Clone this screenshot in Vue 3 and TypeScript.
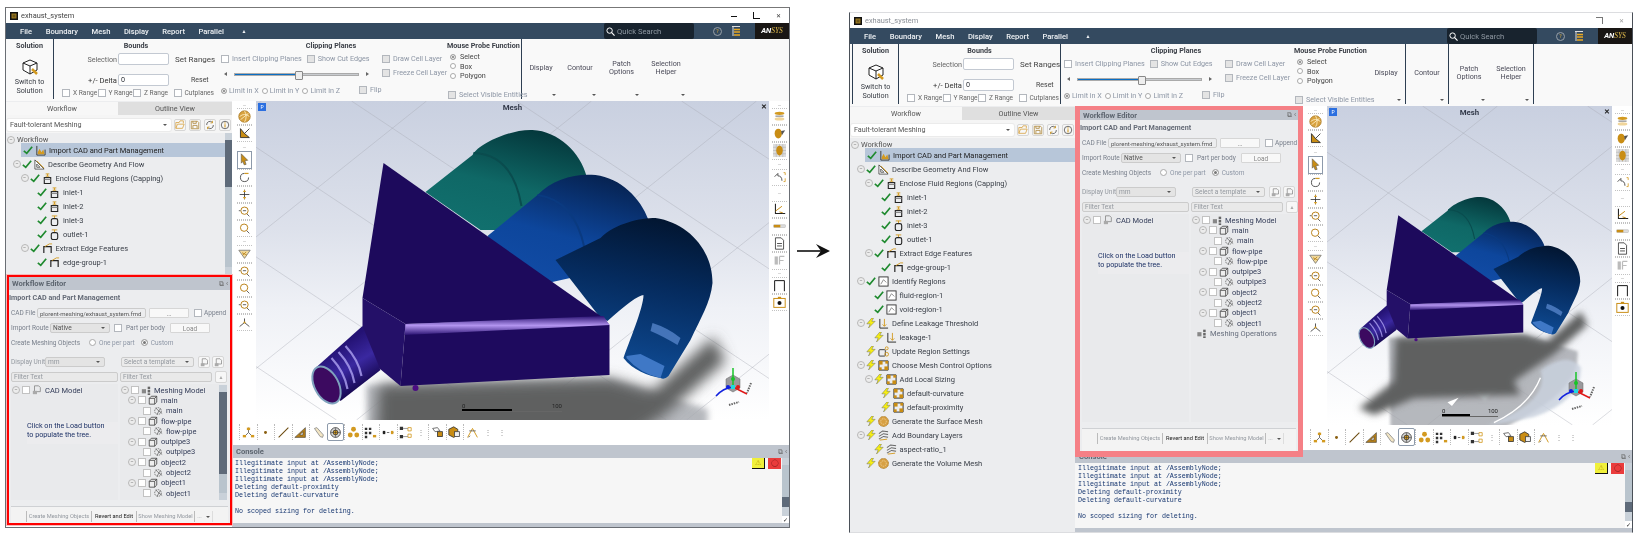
<script setup lang="ts">
interface TreeRow { label: string; level: number; exp?: boolean; status: string; icon: string; sel?: boolean; tone?: string }
interface Win { id: string; title: string; vw: number; grid: string[]; transform: string; tree: TreeRow[]; scroll: boolean }

const baseTree: TreeRow[] = [
  { label: 'Import CAD and Part Management', level: 1, status: 'check', icon: 'i-import', sel: true },
  { label: 'Describe Geometry And Flow', level: 1, exp: true, status: 'check', icon: 'i-geom' },
  { label: 'Enclose Fluid Regions (Capping)', level: 2, exp: true, status: 'check', icon: 'i-cap' },
  { label: 'inlet-1', level: 3, status: 'check', icon: 'i-cap' },
  { label: 'inlet-2', level: 3, status: 'check', icon: 'i-cap' },
  { label: 'inlet-3', level: 3, status: 'check', icon: 'i-capr' },
  { label: 'outlet-1', level: 3, status: 'check', icon: 'i-capr' },
  { label: 'Extract Edge Features', level: 2, exp: true, status: 'check', icon: 'i-edge' },
  { label: 'edge-group-1', level: 3, status: 'check', icon: 'i-edge' },
]
const moreTree: TreeRow[] = [
  { label: 'Identify Regions', level: 1, exp: true, status: 'check', icon: 'i-region' },
  { label: 'fluid-region-1', level: 2, status: 'check', icon: 'i-region' },
  { label: 'void-region-1', level: 2, status: 'check', icon: 'i-region' },
  { label: 'Define Leakage Threshold', level: 1, exp: true, status: 'bolt', icon: 'i-leak' },
  { label: 'leakage-1', level: 2, status: 'bolt', icon: 'i-leak' },
  { label: 'Update Region Settings', level: 1, status: 'bolt', icon: 'i-update' },
  { label: 'Choose Mesh Control Options', level: 1, exp: true, status: 'bolt', icon: 'i-control' },
  { label: 'Add Local Sizing', level: 2, exp: true, status: 'bolt', icon: 'i-control' },
  { label: 'default-curvature', level: 3, status: 'bolt', icon: 'i-control' },
  { label: 'default-proximity', level: 3, status: 'bolt', icon: 'i-control' },
  { label: 'Generate the Surface Mesh', level: 1, status: 'bolt', icon: 'i-ball' },
  { label: 'Add Boundary Layers', level: 1, exp: true, status: 'bolt', icon: 'i-layers' },
  { label: 'aspect-ratio_1', level: 2, status: 'bolt', icon: 'i-layers' },
  { label: 'Generate the Volume Mesh', level: 1, status: 'bolt', icon: 'i-ball' },
]

const grid = (w: number): string[] => {
  const out: string[] = []
  for (let c = -400; c < w + 500; c += 165) {
    out.push(`M${c} 0 L${c + 480} 319`)
    out.push(`M${c + 240} 0 L${c - 160} 319`)
  }
  return out
}

const windows: Win[] = [
  { id: 'a', title: 'exhaust_system', vw: 512, grid: grid(512), transform: 'translate(-256 -103)', tree: baseTree, scroll: true },
  { id: 'b', title: 'exhaust_system', vw: 284, grid: grid(284), transform: 'translate(-141 18) scale(.553)', tree: [...baseTree, ...moreTree], scroll: false },
]

const menus = ['File', 'Boundary', 'Mesh', 'Display', 'Report', 'Parallel']
const leftStrip: (string | number)[] = [7, 'i-globe', 'i-axes', 9, 'i-arrow', 'i-rotate', 'i-pan', 'i-zoomin', 'i-zoomfit', 8, 'i-funnel', 'i-zoomin', 'i-zoomfit', 'i-zoomin', 'i-triad']
const rightStrip: (string | number)[] = [7, 'i-disc', 'i-half', 'i-meshball', 9, 'i-undo', 15, 'i-plot', 'i-bar', 'i-note', 'i-off', 7, 'i-corner', 'i-camera']
const hTools = ['i-net', 'i-dot', 'i-line', 'i-tri', 'i-pencil', 'i-target', 'i-cluster', 'i-grid', 'i-arrows', 'i-split', 'gap', 'i-tag', 'i-boxes', 'i-peak', 'gap', 'gap']
const consoleLines = [
  'Illegitimate input at /AssemblyNode;',
  'Illegitimate input at /AssemblyNode;',
  'Illegitimate input at /AssemblyNode;',
  'Deleting default-proximity',
  'Deleting default-curvature',
  '\u00a0',
  'No scoped sizing for deleting.',
]
const tools = [
  { label: ['Display'], cls: 't1' },
  { label: ['Contour'], cls: 't2' },
  { label: ['Patch', 'Options'], cls: 't3' },
  { label: ['Selection', 'Helper'], cls: 't4' },
]
const meshRows = [
  { label: 'main', level: 1, kind: 'part' },
  { label: 'main', level: 2, kind: 'obj' },
  { label: 'flow-pipe', level: 1, kind: 'part' },
  { label: 'flow-pipe', level: 2, kind: 'obj' },
  { label: 'outpipe3', level: 1, kind: 'part' },
  { label: 'outpipe3', level: 2, kind: 'obj' },
  { label: 'object2', level: 1, kind: 'part' },
  { label: 'object2', level: 2, kind: 'obj' },
  { label: 'object1', level: 1, kind: 'part' },
  { label: 'object1', level: 2, kind: 'obj' },
]
const ribs = [
  'M345 348 Q358 362 361 378',
  'M338 354 Q351 368 354 385',
  'M331 360 Q344 374 347 391',
]
</script>

<template>
  <div class="page">
    <svg class="defs" width="0" height="0" aria-hidden="true">
      <defs>
        <linearGradient id="bg-teal" x1=".7" y1="0" x2=".3" y2="1"><stop offset="0" stop-color="#04373b" /><stop offset=".55" stop-color="#0f6866" /><stop offset="1" stop-color="#11706e" /></linearGradient>
        <linearGradient id="bg-blue" x1=".7" y1="0" x2=".3" y2="1"><stop offset="0" stop-color="#062250" /><stop offset=".55" stop-color="#0d469c" /><stop offset="1" stop-color="#124ca6" /></linearGradient>
        <linearGradient id="bg-navy" x1=".6" y1="0" x2=".4" y2="1"><stop offset="0" stop-color="#021632" /><stop offset=".4" stop-color="#052b5e" /><stop offset=".75" stop-color="#0b3f80" /><stop offset="1" stop-color="#104f9a" /></linearGradient>
        <linearGradient id="bg-pipe" gradientUnits="userSpaceOnUse" x1="335" y1="350" x2="360" y2="390"><stop offset="0" stop-color="#241274" /><stop offset=".5" stop-color="#3a28a0" /><stop offset="1" stop-color="#170852" /></linearGradient>
        <linearGradient id="bg-band" x1="0" y1="0" x2="0" y2="1"><stop offset="0" stop-color="#2a1272" /><stop offset=".5" stop-color="#b294ef" /><stop offset="1" stop-color="#2a1272" /></linearGradient>
        <filter id="soft" x="-20%" y="-20%" width="140%" height="140%"><feGaussianBlur stdDeviation="7" /></filter>
        <filter id="soft2" x="-10%" y="-10%" width="120%" height="120%"><feGaussianBlur stdDeviation="3" /></filter>

        <g id="model">
          <path d="M369 560 L366 387 L610 381 L707 411 Q712 470 628 520 L556 560 Z" fill="#a4a7ad" opacity=".8" filter="url(#soft2)" />
          <path d="M544 545 Q660 500 640 445 Q690 410 713 440 Q715 500 628 530 Z" fill="#c9d1de" opacity=".85" filter="url(#soft2)" />
          <path d="M500 400 Q560 395 590 440 L540 500 Q500 470 490 430 Z" fill="#d7e3e4" opacity=".6" filter="url(#soft2)" />
          <path d="M378 387 L610 381 L652 393 L713 339 L725 363 L664 417 L592 465 L604 490 L411 496 L339 526 L312 514 L375 465 Z" fill="#5f6060" filter="url(#soft)" />
          <path d="M556 540 Q620 510 640 459" fill="none" stroke="#fff" stroke-width="2.500" />
          <path d="M472 503 L492 495 L480 510 Z" fill="#fff" />
          <path d="M425 194 L472 157 C478 146 510 131 532 132 C558 133 580 155 586 178 L590 200 L522 232 L480 232 Z" fill="url(#bg-teal)" />
          <path d="M473 155 Q512 156 521 208" fill="none" stroke="#0a4c4e" stroke-width="2" />
          <path d="M487 238 L537 197 C552 181 575 175 595 177 C620 180 640 200 648 222 L650 262 L525 290 Z" fill="url(#bg-blue)" />
          <path d="M537 197 Q574 202 584 250" fill="none" stroke="#0a3a80" stroke-width="2" />
          <path d="M555 262 L600 240 C615 225 640 220 655 220 C688 225 712 252 712 285 C710 305 700 320 690 342 L668 378 Q664 382 660 380 C648 378 632 372 623 360 C628 345 643 310 643 297 Q636 297 607 323 L600 320 Z" fill="url(#bg-navy)" />
          <path d="M652 325 Q668 330 680 340 L677 347 Q662 338 650 333 Z" fill="#5e8dd4" opacity=".7" />
          <path d="M626 358 L640 356 L664 368 L660 380 Q640 376 626 360 Z" fill="#3f78c6" />
          <path d="M383 165 L603 320 L405 326 L362 300 Z" fill="#1d0a5c" />
          <path d="M362 300 L405 326 L400 388 L376 368 L362 340 Z" fill="#241068" />
          <path d="M405 326 L603 320 L609 327 L609 377 L400 388 Z" fill="#1e0a5e" />
          <path d="M405 326 L603 318 L609 327 L404 337 Z" fill="url(#bg-band)" />
          <circle cx="415" cy="390" r="3" fill="#4b0d82" />
          <path d="M316 369 L362 328 L380 372 L340 403 Z" fill="url(#bg-pipe)" />
          <path v-for="r in ribs" :key="r" :d="r" stroke="#a79bec" stroke-width="2.200" fill="none" opacity=".85" />
          <ellipse cx="326" cy="387" rx="12" ry="20" transform="rotate(-28 326 387)" fill="#3c0a60" stroke="#7fa2bd" stroke-width="2" />
        </g>

        <symbol id="i-check" viewBox="0 0 12 12"><path d="M1 7 L4.5 10 L11 2" fill="none" stroke="#1f8a2f" stroke-width="2" /></symbol>
        <symbol id="i-bolt" viewBox="0 0 12 12"><path d="M7 0 L1 7 H5 L3 12 L11 4 H7 L9 0 Z" fill="#f7ef13" stroke="#555" stroke-width=".5" /></symbol>
        <symbol id="i-import" viewBox="0 0 12 12"><path d="M2 1 V11 H11 V5" fill="none" stroke="#333" /><path d="M3 8 L5 4 L7 8 L9 5 L10.500 10 H3 Z" fill="#d39a20" /></symbol>
        <symbol id="i-geom" viewBox="0 0 12 12"><path d="M1 11 L1 1 L11 11 Z M3 9 L3 5.500 L6.500 9 Z" fill="#fff" stroke="#333" stroke-width=".8" /><path d="M3 2 L11 10" stroke="#d39a20" /></symbol>
        <symbol id="i-cap" viewBox="0 0 12 12"><path d="M4 1 H8 M6 1 V3.500 M4 3.500 H8" stroke="#d39a20" fill="none" /><rect x="2.500" y="5" width="7" height="6.500" fill="none" stroke="#222" stroke-width="1.200" /><path d="M2.500 7 H9.500" stroke="#777" /></symbol>
        <symbol id="i-capr" viewBox="0 0 12 12"><path d="M3 1 H9 M6 1 V4" stroke="#d39a20" fill="none" /><rect x="2.500" y="4" width="7" height="7.500" rx="2" fill="none" stroke="#222" stroke-width="1.200" /></symbol>
        <symbol id="i-edge" viewBox="0 0 12 12"><path d="M2 11 V4 H10 V11" fill="none" stroke="#222" stroke-width="1.300" /><path d="M3 4 L8 1 L11 1" fill="none" stroke="#d39a20" /></symbol>
        <symbol id="i-region" viewBox="0 0 12 12"><rect x="1" y="1" width="10" height="10" fill="#fff" stroke="#333" /><path d="M3 9 L6 4 L9 7" fill="none" stroke="#888" /></symbol>
        <symbol id="i-leak" viewBox="0 0 12 12"><path d="M2 1 V11 H11" fill="none" stroke="#222" /><path d="M7 1 V9 M5 7 L7 9 L9 7" fill="none" stroke="#d39a20" /></symbol>
        <symbol id="i-update" viewBox="0 0 12 12"><rect x="1" y="4" width="7" height="7" rx="1" fill="none" stroke="#333" /><circle cx="9.500" cy="2.500" r="1.600" fill="none" stroke="#d39a20" /><circle cx="9.500" cy="9" r="2" fill="none" stroke="#d39a20" /></symbol>
        <symbol id="i-control" viewBox="0 0 12 12"><path d="M1 11 V1 H11" fill="none" stroke="#222" /><path d="M11 1 V11 H1" fill="none" stroke="#222" /><rect x="1" y="1" width="4" height="4" fill="#c98d14" /><rect x="7" y="7" width="4" height="4" fill="#c98d14" /><rect x="8" y="1" width="3" height="3" fill="#c98d14" /><rect x="1" y="8" width="3" height="3" fill="#c98d14" /></symbol>
        <symbol id="i-ball" viewBox="0 0 12 12"><circle cx="6" cy="6" r="5.500" fill="#d7a043" stroke="#a8761d" stroke-dasharray="1 .6" /><circle cx="6" cy="6" r="3" fill="none" stroke="#f2d9a4" stroke-dasharray="1 1" /></symbol>
        <symbol id="i-layers" viewBox="0 0 12 12"><path d="M1 4 L5 1 L11 2 M1 7 L6 4 L11 5 M1 10 L6 7 L11 8" fill="none" stroke="#666" stroke-width="1.100" /><path d="M2 11 L10 10" stroke="#d39a20" /></symbol>
        <symbol id="i-cube" viewBox="0 0 12 12"><path d="M1.500 4 L8 4 L8 11 L1.500 11 Z M1.500 4 L4 1.500 H10.500 V8.500 L8 11 M8 4 L10.500 1.500" fill="#eee" stroke="#444" /></symbol>
        <symbol id="i-obj" viewBox="0 0 12 12"><circle cx="6" cy="6" r="4" fill="none" stroke="#666" stroke-dasharray="2 1" /><path d="M3 2 L7 6 L5 10 M9 3 L7 6 L11 9" fill="none" stroke="#555" stroke-width=".8" /></symbol>
        <symbol id="i-stack" viewBox="0 0 12 12"><rect x="1" y="5" width="5" height="5" fill="#888" /><rect x="8" y="2" width="3" height="3" fill="#666" /><rect x="8" y="6" width="3" height="3" fill="#666" /><rect x="8" y="10" width="3" height="2" fill="#666" /></symbol>
        <symbol id="i-file" viewBox="0 0 12 12"><path d="M3 1 H8 L10 3 V8 H3 Z" fill="none" stroke="#888" /><path d="M1 7 H6 V11 H1 Z" fill="#aaa" /></symbol>
        <symbol id="i-open" viewBox="0 0 12 12"><path d="M1 10 V3 H5 L6 1 H10 V4 M1 10 H9 L11 5 H3 Z" fill="none" stroke="#d9a64a" /></symbol>
        <symbol id="i-save" viewBox="0 0 12 12"><path d="M1.500 1.500 H9 L10.500 3 V10.500 H1.500 Z M3.500 10 V6.500 H8.500 V10 M3.500 1.500 V4 H7.500 V1.500" fill="none" stroke="#b08a40" /></symbol>
        <symbol id="i-sync" viewBox="0 0 12 12"><path d="M2 6 A4 4 0 0 1 9 3 M10 6 A4 4 0 0 1 3 9" fill="none" stroke="#555" /><path d="M9 1 V3.500 H6.500 M3 11 V8.500 H5.500" fill="none" stroke="#d39a20" /></symbol>
        <symbol id="i-info" viewBox="0 0 12 12"><circle cx="6" cy="6" r="4.500" fill="none" stroke="#555" /><path d="M6 5 V9" stroke="#d39a20" stroke-width="1.300" /><circle cx="6" cy="3.500" r=".8" fill="#d39a20" /></symbol>
        <symbol id="i-globe" viewBox="0 0 16 16"><circle cx="8" cy="8" r="7" fill="#d8a23f" stroke="#a8761d" /><path d="M2 8 Q8 3 14 8 M3 12 L13 4 M8 1 Q12 8 8 15" fill="none" stroke="#fff1c9" /></symbol>
        <symbol id="i-axes" viewBox="0 0 16 16"><path d="M3 2 V13 H14 L8 8 Z" fill="#c98d14" stroke="#222" /><path d="M8 8 L14 2" stroke="#222" /></symbol>
        <symbol id="i-arrow" viewBox="0 0 16 16"><path d="M4 1 L12 9 L8.500 9.500 L10 14 L7.500 14.500 L6 10.500 L4 12.500 Z" fill="#c98d14" stroke="#555" stroke-width=".7" /></symbol>
        <symbol id="i-rotate" viewBox="0 0 16 16"><path d="M13 8 A5 5 0 1 1 8 3" fill="none" stroke="#333" /><path d="M8 3 L13 3" stroke="#d39a20" stroke-width="1.500" /></symbol>
        <symbol id="i-pan" viewBox="0 0 16 16"><path d="M8 2 V14 M2 8 H14" stroke="#333" /><path d="M8 2 L6 5 H10 Z M8 14 L6 11 H10 Z" fill="#d39a20" /></symbol>
        <symbol id="i-zoomin" viewBox="0 0 16 16"><circle cx="8" cy="7" r="4.500" fill="none" stroke="#b9821a" stroke-width="1.200" /><path d="M11 11 L14 14 M1 7 H3 M6 7 H10" stroke="#444" /></symbol>
        <symbol id="i-zoomfit" viewBox="0 0 16 16"><circle cx="7.500" cy="7" r="4.500" fill="none" stroke="#b9821a" stroke-width="1.200" /><path d="M11 11 L14 14" stroke="#444" /></symbol>
        <symbol id="i-funnel" viewBox="0 0 16 16"><path d="M1 4 H15 L8 14 Z" fill="#f1d99b" stroke="#777" /><path d="M5 7 L11 10 M10 6 L6 10" stroke="#b9821a" /></symbol>
        <symbol id="i-triad" viewBox="0 0 16 16"><path d="M8 3 V8 L2 13 M8 8 L14 13" fill="none" stroke="#333" /><circle cx="8" cy="8" r="1.300" fill="#d39a20" /></symbol>
        <symbol id="i-disc" viewBox="0 0 16 16"><ellipse cx="8" cy="4" rx="6" ry="2" fill="#d39a20" /><rect x="3" y="7" width="10" height="1" fill="#555" /><ellipse cx="8" cy="11" rx="6" ry="2" fill="#f0d59b" /></symbol>
        <symbol id="i-half" viewBox="0 0 16 16"><ellipse cx="6.500" cy="8" rx="4.500" ry="6" fill="#c98d14" /><path d="M10 5 L15 4 L11 10 Z" fill="#555" /></symbol>
        <symbol id="i-meshball" viewBox="0 0 16 16"><rect width="16" height="16" fill="#ddd" /><path d="M0 4 H16 M0 8 H16 M0 12 H16 M4 0 V16 M8 0 V16 M12 0 V16" stroke="#aaa" stroke-width=".6" /><ellipse cx="8" cy="8" rx="4" ry="6" fill="#c98d14" /></symbol>
        <symbol id="i-undo" viewBox="0 0 16 16"><path d="M2 7 L6 3 L6 6 Q11 6 11 12" fill="none" stroke="#333" /><path d="M13 2 H15 V5 M15 9 V13 H13" fill="none" stroke="#d39a20" /></symbol>
        <symbol id="i-plot" viewBox="0 0 16 16"><path d="M3 1 V13 H15" fill="none" stroke="#222" stroke-width="1.300" /><path d="M3 10 L11 4 M8 11 L12 12" stroke="#c98d14" stroke-width="1.200" /></symbol>
        <symbol id="i-bar" viewBox="0 0 16 16"><rect x="1" y="6" width="14" height="3" fill="#ddd" stroke="#999" stroke-width=".5" /><rect x="1" y="6" width="8" height="3" fill="#c98d14" /></symbol>
        <symbol id="i-note" viewBox="0 0 16 16"><path d="M3 1 H10 L13 4 V15 H3 Z M5 8 H11 M5 11 H11" fill="none" stroke="#333" /></symbol>
        <symbol id="i-off" viewBox="0 0 16 16"><rect x="2" y="3" width="4" height="10" fill="#bbb" /><path d="M8 3 H14 M8 8 H13 M8 3 V13" stroke="#bbb" stroke-width="1.500" /></symbol>
        <symbol id="i-corner" viewBox="0 0 16 16"><path d="M2 15 V2 H14 V15" fill="none" stroke="#111" stroke-width="1.200" /></symbol>
        <symbol id="i-camera" viewBox="0 0 16 16"><rect x="1" y="3" width="14" height="11" fill="#fff" stroke="#c98d14" stroke-width="1.200" /><circle cx="8" cy="8.500" r="2.500" fill="#111" /><rect x="6" y="1" width="4" height="2" fill="#c98d14" /></symbol>
        <symbol id="i-net" viewBox="0 0 16 16"><path d="M8 2 V8 M3 13 L8 8 L13 13" stroke="#555" fill="none" /><rect x="6" y="2" width="4" height="3" fill="#d39a20" /><rect x="1" y="11" width="4" height="3" fill="#d39a20" /><rect x="11" y="11" width="4" height="3" fill="#d39a20" /></symbol>
        <symbol id="i-dot" viewBox="0 0 16 16"><circle cx="8" cy="8" r="1.800" fill="#8a5f10" /></symbol>
        <symbol id="i-line" viewBox="0 0 16 16"><path d="M2 14 L14 2" stroke="#6c4c10" stroke-width="1.300" /></symbol>
        <symbol id="i-tri" viewBox="0 0 16 16"><path d="M1 14 L14 2 V14 Z M7 11 H11 V7 Z" fill="#b9821a" stroke="#333" stroke-width=".7" /></symbol>
        <symbol id="i-pencil" viewBox="0 0 16 16"><path d="M3 3 L6 2 L14 11 L13 14 L10 13 Z" fill="#f3e6c4" stroke="#888" /></symbol>
        <symbol id="i-target" viewBox="0 0 16 16"><circle cx="8" cy="8" r="6" fill="#d8d8d8" stroke="#333" /><circle cx="8" cy="8" r="3" fill="#d39a20" stroke="#333" /><path d="M8 2 V14 M2 8 H14" stroke="#333" stroke-width=".6" /></symbol>
        <symbol id="i-cluster" viewBox="0 0 16 16"><circle cx="8" cy="4" r="3" fill="#d39a20" /><circle cx="4" cy="11" r="3" fill="#d39a20" /><circle cx="12" cy="11" r="3" fill="#d39a20" /></symbol>
        <symbol id="i-grid" viewBox="0 0 16 16"><path d="M1 2 H4 V5 H1 Z M6 2 H9 V5 H6 Z M1 7 H4 V10 H1 Z M6 7 H9 V10 H6 Z M1 12 H4 V15 H1 Z" fill="#333" /><rect x="11" y="11" width="4" height="3" fill="#d39a20" /></symbol>
        <symbol id="i-arrows" viewBox="0 0 16 16"><path d="M1 8 H15" stroke="#555" stroke-dasharray="3 2" /><rect x="1" y="6" width="3" height="4" fill="#222" /><rect x="11" y="6" width="3" height="4" fill="#d39a20" /></symbol>
        <symbol id="i-split" viewBox="0 0 16 16"><path d="M1 1 H5 V5 H1 Z M1 11 H5 V15 H1 Z" fill="#333" /><path d="M11 2 H15 V6 H11 Z M11 10 H15 V14 H11 Z" fill="none" stroke="#d39a20" /><path d="M5 3 H11 M5 13 H11" stroke="#888" /></symbol>
        <symbol id="i-tag" viewBox="0 0 16 16"><path d="M2 3 L8 2 L11 6 L5 7 Z" fill="#fff" stroke="#555" /><rect x="8" y="7" width="6" height="6" fill="#c98d14" stroke="#333" /></symbol>
        <symbol id="i-boxes" viewBox="0 0 16 16"><path d="M1 4 L7 1 L12 4 V11 L7 14 L1 11 Z" fill="#c98d14" stroke="#333" /><rect x="8" y="7" width="6" height="6" fill="#eee" stroke="#444" /></symbol>
        <symbol id="i-peak" viewBox="0 0 16 16"><path d="M2 14 L8 3 L14 14" fill="none" stroke="#d39a20" stroke-width="1.200" /><path d="M4 6 L12 6 M3 14 L5 12" stroke="#555" /></symbol>
      </defs>
    </svg>

    <template v-for="(w, wi) in windows" :key="w.id">
      <div v-if="wi === 1" class="arrow-col">
        <svg class="arrow" width="34" height="16" viewBox="0 0 34 16"><path d="M0 8 H26" stroke="#111" stroke-width="1.600" /><path d="M33 8 L19 1 L24 8 L19 15 Z" fill="#111" /></svg>
      </div>

      <section class="win" :class="w.id">
        <header class="titlebar">
          <span class="appicon"></span>
          <span class="wintitle">{{ w.title }}</span>
          <span class="winbtns"><i class="wb min"></i><i class="wb max"></i><i class="wb close">✕</i></span>
        </header>

        <nav class="menubar">
          <span v-for="m in menus" :key="m" class="menu">{{ m }}</span>
          <span class="menu up">▲</span>
          <span class="search"><svg width="9" height="9" viewBox="0 0 10 10"><circle cx="4" cy="4" r="3" fill="none" stroke="#fff" stroke-width="1.100" /><path d="M6 6 L9.500 9.500" stroke="#fff" stroke-width="1.300" /></svg>Quick Search</span>
          <span class="help">?</span>
          <svg class="listicon" width="9" height="10" viewBox="0 0 9 10"><path d="M0 .5 H8" stroke="#ddd" /><path d="M1 1 V10" stroke="#ddd" /><path d="M2 3.500 H8 M2 6 H8 M2 9 H8" stroke="#e8a820" stroke-width="1.400" /></svg>
          <span class="brand">AN<b>SYS</b></span>
        </nav>

        <div class="ribbon">
          <div class="sec sol">
            <div class="sec-title">Solution</div>
            <svg class="solicon" width="16" height="16" viewBox="0 0 16 16"><path d="M1 4 L8 1 L15 4 V11 L8 15 L1 11 Z M1 4 L8 7 L15 4 M8 7 V15" fill="#fff" stroke="#222" /><path d="M10 10 L15 15" stroke="#d39a20" stroke-width="2.500" /></svg>
            <div class="sol-label">Switch to<br />Solution</div>
          </div>
          <div class="sec bounds">
            <div class="sec-title">Bounds</div>
            <div class="bgrid">
              <span class="rlab">Selection</span><span class="field"></span><span class="act">Set Ranges</span>
              <span class="rlab big">+/- Delta</span><span class="field">0</span><span class="act reset">Reset</span>
            </div>
            <div class="brow">
              <label class="ck"><i class="box"></i>X Range</label>
              <label class="ck"><i class="box"></i>Y Range</label>
              <label class="ck"><i class="box"></i>Z Range</label>
              <label class="ck cut"><i class="box"></i>Cutplanes</label>
            </div>
          </div>
          <div class="sec clip">
            <div class="sec-title">Clipping Planes</div>
            <div class="cliprow">
              <label class="ck off"><i class="box"></i>Insert Clipping Planes</label>
              <label class="ck off"><i class="box dis"></i>Show Cut Edges</label>
            </div>
            <div class="slider">
              <i class="tri l"></i>
              <span class="track"><span class="fill"></span><span class="thumb"></span></span>
              <i class="tri r"></i>
            </div>
            <div class="cliprow limits">
              <label class="rd off"><i class="dot on"></i>Limit in X</label>
              <label class="rd off"><i class="dot"></i>Limit in Y</label>
              <label class="rd off"><i class="dot"></i>Limit in Z</label>
              <label class="ck off flip"><i class="box dis"></i>Flip</label>
            </div>
            <div class="cellcol">
              <label class="ck off"><i class="box dis"></i>Draw Cell Layer</label>
              <label class="ck off"><i class="box dis"></i>Freeze Cell Layer</label>
            </div>
          </div>
          <div class="sec mouse">
            <div class="sec-title">Mouse Probe Function</div>
            <label class="rd v"><i class="dot on"></i>Select</label>
            <label class="rd v"><i class="dot"></i>Box</label>
            <label class="rd v"><i class="dot"></i>Polygon</label>
            <label class="ck off vis"><i class="box dis"></i>Select Visible Entities</label>
          </div>
          <div v-for="t in tools" :key="t.cls" class="tool" :class="t.cls">
            <span class="tool-label"><span v-for="l in t.label" :key="l">{{ l }}</span></span>
            <i class="caret"></i>
          </div>
        </div>

        <div class="body">
          <div class="leftcol">
            <div class="tabs"><span class="tab active">Workflow</span><span class="tab">Outline View</span></div>
            <div class="combo-row">
              <span class="combo">Fault-tolerant Meshing<i class="caret"></i></span>
              <span class="sq"><svg width="10" height="10"><use href="#i-open" /></svg></span>
              <span class="sq"><svg width="10" height="10"><use href="#i-save" /></svg></span>
              <span class="sq"><svg width="10" height="10"><use href="#i-sync" /></svg></span>
              <span class="sq"><svg width="10" height="10"><use href="#i-info" /></svg></span>
            </div>
            <div class="treewrap">
              <div class="tree">
                <div class="row top"><i class="exp">−</i><span class="lab">Workflow</span></div>
                <div v-for="r in w.tree" :key="r.label" class="row" :class="{ sel: r.sel }" :style="r.sel ? undefined : { paddingLeft: (r.level - 1) * 7.5 + 7 + 'px' }">
                  <i class="exp" :class="{ none: !r.exp }">−</i>
                  <svg class="st" width="10" height="10"><use :href="'#i-' + r.status" /></svg>
                  <svg class="ic" width="11" height="11"><use :href="'#' + r.icon" /></svg>
                  <span class="lab">{{ r.label }}</span>
                </div>
              </div>
              <div v-if="w.scroll" class="vscroll"><i class="sb-up"></i><i class="sb-thumb"></i><i class="sb-down"></i></div>
            </div>
          </div>

          <div class="editor">
            <div class="ed-head"><span>Workflow Editor</span><span class="ed-ic">⧉ ‹</span></div>
            <div class="ed-body">
              <div class="ed-title">Import CAD and Part Management</div>
              <div class="ed-row">
                <span class="el l-cad">CAD File</span><span class="efield w-cad">plorent-meshing/exhaust_system.fmd</span>
                <span class="ebtn w-dots">...</span><i class="box"></i><span class="el">Append</span>
              </div>
              <div class="ed-row">
                <span class="el l-route">Import Route</span><span class="efield sel w-route">Native<i class="caret"></i></span>
                <i class="box"></i><span class="el l-part">Part per body</span><span class="ebtn w-load">Load</span>
              </div>
              <div class="ed-row">
                <span class="el wide">Create Meshing Objects</span>
                <label class="rd off"><i class="dot big"></i>One per part</label>
                <label class="rd off"><i class="dot big on"></i>Custom</label>
              </div>
              <div class="ed-row unit">
                <span class="el faint l-unit">Display Unit</span><span class="efield sel w-route faint">mm<i class="caret"></i></span>
                <span class="efield sel w-tpl faint">Select a template<i class="caret"></i></span>
                <span class="sq"><svg width="9" height="9"><use href="#i-file" /></svg></span>
                <span class="sq"><svg width="9" height="9"><use href="#i-file" /></svg></span>
              </div>
              <div class="ed-row filter">
                <span class="efield w-fl faint">Filter Text</span><span class="efield w-fr faint">Filter Text</span><span class="sq low">▲</span>
              </div>
              <div class="trees">
                <div class="tcol">
                  <div class="trow"><i class="exp">−</i><i class="box"></i><svg width="10" height="10"><use href="#i-file" /></svg><span class="lab">CAD Model</span></div>
                  <div class="hint">Click on the Load button<br />to populate the tree.</div>
                </div>
                <div class="tcol right">
                  <div class="mlist">
                    <div class="trow"><i class="exp">−</i><i class="box"></i><svg width="10" height="10"><use href="#i-stack" /></svg><span class="lab">Meshing Model</span></div>
                    <div v-for="(m, i) in meshRows" :key="i" class="trow" :class="'lv' + m.level">
                      <i v-if="m.kind === 'part'" class="exp">−</i><i class="box"></i>
                      <svg width="10" height="10"><use :href="m.kind === 'part' ? '#i-cube' : '#i-obj'" /></svg>
                      <span class="lab">{{ m.label }}</span>
                    </div>
                    <div v-if="!w.scroll" class="trow ops"><svg width="11" height="10"><use href="#i-stack" /></svg><span class="lab">Meshing Operations</span></div>
                  </div>
                  <div v-if="w.scroll" class="vscroll slim"><i class="sb-up"></i><i class="sb-thumb long"></i><i class="sb-down"></i></div>
                </div>
              </div>
              <div class="ed-foot">
                <span class="fbtn faint">Create Meshing Objects</span>
                <span class="fbtn strong">Revert and Edit</span>
                <span class="fbtn faint">Show Meshing Model</span>
                <span class="fbtn faint more">...<i class="caret"></i></span>
              </div>
            </div>
          </div>

          <div class="graphics">
            <div class="gtop">
              <div class="strip">
                <template v-for="(s, i) in leftStrip" :key="i">
                  <span v-if="typeof s === 'number'" class="dots" :style="{ height: s + 'px' }">···</span>
                  <span v-else class="cell" :class="{ picked: s === 'i-arrow' }"><svg width="13" height="13"><use :href="'#' + s" /></svg></span>
                </template>
              </div>
              <div class="viewport">
                <svg class="scene" :viewBox="`0 0 ${w.vw} 319`">
                  <path v-for="g in w.grid" :key="g" :d="g" stroke="#a8abb3" stroke-opacity=".5" stroke-width=".8" fill="none" />
                  <g :transform="w.transform"><use href="#model" /></g>
                </svg>
                <span class="vp-badge">P</span>
                <span class="vp-title">Mesh</span>
                <span class="vp-close">✕</span>
                <div class="scalebar"><span class="sb-txt"><i>0</i><i>100</i></span><span class="sb-line"><b></b></span></div>
                <svg class="triad" width="44" height="44" viewBox="0 0 44 44">
                  <path d="M22 10 L29 14 V23 L22 27 L15 23 V14 Z" fill="#9a9a9d" stroke="#666" stroke-width=".5" />
                  <path d="M22 20 V3" stroke="#18c428" stroke-width="1.500" /><circle cx="22" cy="14" r="2" fill="#18c428" />
                  <path d="M22 22 L36 29" stroke="#e01818" stroke-width="1.500" /><circle cx="27" cy="22" r="2" fill="#e01818" />
                  <path d="M22 22 Q12 23 5 31" stroke="#1020e0" stroke-width="1.500" fill="none" /><circle cx="17" cy="22" r="2" fill="#1020e0" />
                  <rect x="20" y="20" width="4" height="4" fill="#20d8e0" />
                  <path d="M40 18 L36 28 M18 40 L28 37" stroke="#666" stroke-dasharray="1.500 1" stroke-width="2" />
                </svg>
              </div>
              <div class="strip rs">
                <template v-for="(s, i) in rightStrip" :key="i">
                  <span v-if="typeof s === 'number'" class="dots" :style="{ height: s + 'px' }">···</span>
                  <span v-else class="cell"><svg width="13" height="13"><use :href="'#' + s" /></svg></span>
                </template>
              </div>
            </div>
            <div class="htools">
              <template v-for="(t, i) in hTools" :key="i">
                <span v-if="t === 'gap'" class="hdots">⋮</span>
                <span v-else class="hcell" :class="{ picked: t === 'i-target' }"><svg width="13" height="13"><use :href="'#' + t" /></svg></span>
              </template>
            </div>
          </div>

          <div class="console">
            <div class="ed-head con-head"><span>Console</span><span class="ed-ic">⧉ ‹</span></div>
            <div class="con-body">
              <div class="con-text"><div v-for="(l, i) in consoleLines" :key="i">{{ l }}</div></div>
              <span class="warnbtn y">⚠</span><span class="warnbtn r">◯</span>
              <div class="vscroll slim con"><i class="sb-up"></i><i class="sb-space"></i><i class="sb-thumb"></i><i class="sb-down"></i><span class="tick">✓</span></div>
            </div>
            <div class="con-foot"></div>
          </div>
        </div>
      </section>
    </template>
  </div>
</template>

<style>
html, body { margin: 0; background: #fff; overflow: hidden; }
</style>

<style scoped>
.page { display: flex; align-items: flex-start; width: 1643px; height: 539px; padding-left: 5px; box-sizing: border-box; background: #fff; font-family: Roboto, "Liberation Sans", sans-serif; font-size: 7.2px; color: #2d3138; overflow: hidden; }
.defs { display: block; width: 0; height: 0; flex: none; }
i { font-style: normal; }
.arrow-col { width: 59px; flex: none; padding-top: 243px; padding-left: 7px; box-sizing: border-box; }
.arrow { display: block; }
.win { width: 785px; flex: none; height: 521px; margin-top: 7px; box-sizing: border-box; display: flex; flex-direction: column; border: 1px solid #6a6e74; border-top-color: #777; background: #fff; filter: blur(.3px); }
.win.b { width: 784px; margin-top: 12px; border-color: #dcdde0; border-left-color: #4a5058; border-right-color: #4a5058; }

.titlebar { height: 15px; flex: none; display: flex; align-items: center; padding-left: 4px; gap: 3px; }
.appicon { width: 8px; height: 8px; background: #3b3016; box-shadow: inset 0 0 0 1.500px #111, inset 0 0 2px 3px #9c7a20; }
.wintitle { color: #444; font-size: 7.4px; }
.b .wintitle { color: #8a8f96; }
.winbtns { margin-left: auto; display: flex; align-items: center; gap: 16px; padding-right: 7px; }
.wb { width: 6px; height: 6px; display: block; font-size: 6px; line-height: 6px; color: #333; }
.min { border-bottom: 1px solid #111; height: 3px; margin-top: -2px; }
.max { border-left: 1px solid #111; border-bottom: 1px solid #111; }
.b .min { visibility: hidden; }
.b .max { border-left: 0; border-bottom: 0; border-top: 1px solid #777; border-right: 1px solid #777; }
.b .close { color: #999; }

.menubar { height: 16px; flex: none; background: #344a60; display: flex; align-items: center; color: #eef1f4; font-weight: 500; font-size: 7.6px; padding-left: 14px; }
.menu { margin-right: 13.500px; }
.menu.up { font-size: 5px; margin-left: 4px; }
.search { margin-left: auto; width: 90px; height: 16px; background: #18232e; border-radius: 2px; box-sizing: border-box; padding-left: 2px; display: flex; align-items: center; gap: 2px; color: #8f98a2; font-weight: 400; }
.help { margin-left: 19px; width: 7px; height: 7px; border: 1px solid #98a0a8; border-radius: 50%; font-size: 5px; line-height: 7px; text-align: center; color: #c8a040; }
.listicon { margin-left: 10px; }
.brand { margin-left: 14px; width: 34px; height: 16px; line-height: 16px; background: #191614; color: #fff; font-weight: 700; font-style: italic; font-size: 7.500px; text-align: center; }
.brand b { color: #e3bc4c; font-weight: 400; font-family: "Liberation Serif", serif; }

.ribbon { height: 62px; flex: none; display: flex; background: #f9f9f9; position: relative; }
.sec { box-sizing: border-box; height: 60px; position: relative; }
.sec-title { text-align: center; font-weight: 700; color: #3c4048; padding-top: 2px; height: 11px; }
.sol { width: 48px; border-right: 1px solid #2e3f52; display: flex; flex-direction: column; align-items: center; }
.b .sol { width: 47px; margin-left: 2px; border-left: 1px solid #2e3f52; }
.solicon { margin-top: 7px; }
.sol-label { text-align: center; line-height: 8.500px; margin-top: 3px; color: #3c4048; }
.bounds { width: 164px; }
.b .bounds { width: 162px; border-right: 1px solid #2e3f52; }
.bgrid { display: grid; grid-template-columns: 64px 50px 1fr; align-items: center; row-gap: 9px; padding-top: 1px; }
.rlab { text-align: right; color: #666; padding-right: 1px; }
.rlab.big { color: #333; font-size: 7.6px; }
.field { height: 10px; line-height: 10px; border: 1px solid #c3c9d2; border-radius: 2px; background: #fff; padding-left: 2px; box-sizing: content-box; width: 47px; }
.act { font-size: 8px; color: #444; padding-left: 7px; white-space: nowrap; }
.act.reset { padding-left: 23px; font-size: 7px; }
.brow { display: flex; padding: 3px 0 0 8px; font-size: 6.600px; }
.brow .ck { width: 35.500px; flex: none; }
.ck { display: flex; align-items: center; gap: 3px; white-space: nowrap; color: #666; }
.ck.off, .rd.off { color: #8d96a5; }
.brow .ck.cut { margin-left: 5px; width: 37px; }
.box { width: 6px; height: 6px; flex: none; border: 1px solid #b3b7bd; background: #fff; display: inline-block; }
.box.dis { background: #e4e4e4; }
.clip { width: 226px; }
.b .clip { width: 230px; }
.cliprow { display: flex; gap: 5px; padding: 2px 0 0 3px; }
.slider { display: flex; align-items: center; gap: 7px; padding: 9px 0 0 6px; width: 150px; }
.tri { width: 0; height: 0; border-top: 2px solid transparent; border-bottom: 2px solid transparent; flex: none; }
.tri.l { border-right: 3px solid #666; }
.tri.r { border-left: 3px solid #666; }
.track { width: 125px; height: 3px; background: #c9ccd0; border: 1px solid #aaa; box-sizing: border-box; position: relative; display: block; }
.fill { display: block; width: 49%; height: 100%; background: #0a6ec4; }
.thumb { position: absolute; left: 49%; top: -3px; width: 6px; height: 7px; background: #eee; border: 1px solid #888; border-radius: 1px; }
.limits { padding-top: 10px; gap: 3px; }
.rd { display: flex; align-items: center; gap: 2px; white-space: nowrap; color: #555; }
.dot { width: 4px; height: 4px; border: 1px solid #aaa; border-radius: 50%; display: inline-block; background: #fff; flex: none; }
.dot.on { background: #777; box-shadow: inset 0 0 0 1px #fff; }
.dot.big { width: 5px; height: 5px; }
.flip { margin-left: 16px; margin-top: -2px; }
.cellcol { position: absolute; left: 164px; top: 15px; display: flex; flex-direction: column; gap: 5px; }
.mouse { width: 78px; padding-left: 0; border-right: 1px solid #2e3f52; }
.b .mouse { width: 76px; border-right: 0; }
.mouse .sec-title { white-space: nowrap; text-align: left; margin-left: 3px; }
.rd.v { padding-left: 6px; height: 9.500px; color: #444; gap: 4px; }
.vis { position: absolute; left: 4px; top: 51px; }
.tool { height: 60px; box-sizing: border-box; position: relative; display: flex; align-items: center; justify-content: center; color: #4a4a58; }
.tool-label { display: flex; flex-direction: column; align-items: center; line-height: 8.500px; margin-top: -2px; }
.t1 { width: 38px; } .t2 { width: 40px; } .t3 { width: 43px; } .t4 { width: 46px; }
.b .t1 { width: 39px; border-right: 1px solid #2e3f52; }
.b .t2 { width: 43px; border-right: 1px solid #2e3f52; }
.b .t3 { width: 40px; }
.b .t4 { width: 45px; border-right: 1px solid #2e3f52; }
.caret { width: 0; height: 0; border-left: 2.500px solid transparent; border-right: 2.500px solid transparent; border-top: 2.500px solid #555; display: block; }
.tool .caret { position: absolute; right: 4px; bottom: 3px; }

.body { flex: 1; min-height: 0; display: grid; background: #fff; }
.a .body { grid-template-columns: 226px 1fr; grid-template-rows: 173px 171px 1fr; }
.b .body { grid-template-columns: 225px 228px 1fr; grid-template-rows: 344px 1fr; }
.leftcol { background: #ecedef; display: flex; flex-direction: column; min-height: 0; overflow: hidden; }
.a .leftcol { grid-column: 1; grid-row: 1; }
.b .leftcol { grid-column: 1; grid-row: 1 / 3; }
.editor { min-height: 0; box-sizing: border-box; display: flex; flex-direction: column; background: #ecedef; z-index: 2; }
.a .editor { grid-column: 1; grid-row: 2 / 4; border: 2px solid #f00; outline: 1px solid #f6b9b9; margin: 1px 0 2px 1px; }
.b .editor { grid-column: 2; grid-row: 1; border: 5px solid #f58086; border-bottom-width: 6px; border-top-width: 4px; margin-bottom: -7px; }
.graphics { min-width: 0; min-height: 0; display: flex; flex-direction: column; }
.a .graphics { grid-column: 2; grid-row: 1 / 3; }
.b .graphics { grid-column: 3; grid-row: 1; }
.console { min-width: 0; display: flex; flex-direction: column; }
.a .console { grid-column: 2; grid-row: 3; }
.b .console { grid-column: 2 / 4; grid-row: 2; }

.tabs { display: flex; height: 13px; flex: none; margin-top: 1px; }
.tab { flex: 1; text-align: center; line-height: 13px; background: #dfdfdf; color: #555; }
.tab.active { background: #f7f7f7; }
.tab:first-child { flex: 0 0 112px; }
.combo-row { height: 18px; flex: none; display: flex; align-items: center; gap: 3px; padding: 2px 1px 0 1px; box-sizing: border-box; background: #f5f5f5; }
.combo { flex: 1; height: 12px; line-height: 12px; background: #fff; border-radius: 2px; padding-left: 3px; position: relative; color: #555; box-shadow: 0 0 0 1px #ebebeb; }
.combo .caret { position: absolute; right: 4px; top: 5px; }
.sq { width: 12px; height: 12px; flex: none; border: 1px solid #d6d6d6; border-radius: 2px; display: flex; align-items: center; justify-content: center; background: #f7f7f7; box-sizing: border-box; }
.sq svg { display: block; }
.sq.low { font-size: 5px; color: #aaa; }
.treewrap { flex: 1; min-height: 0; display: flex; }
.tree { flex: 1; min-width: 0; overflow: hidden; padding-top: 2px; }
.row { height: 14px; display: flex; align-items: center; white-space: nowrap; color: #3b4049; font-size: 7.500px; }
.row.top { height: 9px; padding-left: 1px; }
.row.top .lab { margin-left: 2px; color: #555; }
.row.sel { background: #b7c6d9; margin-left: 15px; padding-left: 1px; margin-top: -1px; color: #222; }
.row.sel .exp { display: none; }
.exp { width: 6px; height: 6px; flex: none; border: 1px solid #b8b8b8; border-radius: 50%; font-size: 6px; line-height: 6px; text-align: center; color: #777; display: inline-block; background: #ececec; }
.exp.none { visibility: hidden; }
.st { margin-left: 1px; flex: none; }
.ic { margin-left: 2px; margin-right: 3px; flex: none; }
.vscroll { width: 7px; flex: none; background: #b9c4cd; display: flex; flex-direction: column; position: relative; }
.sb-up, .sb-down { height: 7px; background: #c9d1d9; flex: none; }
.sb-thumb { height: 47px; background: #5e6a79; flex: none; }
.sb-down { margin-top: auto; }
.sb-space { flex: 1; }

.ed-head { height: 13px; flex: none; background: #bfc5ce; display: flex; align-items: center; justify-content: space-between; padding: 0 2px 0 3px; font-weight: 700; color: #5e6670; font-size: 7.600px; }
.b .editor .ed-head { height: 10px; }
.ed-ic { font-size: 7px; color: #666; font-weight: 400; }
.ed-body { flex: 1; min-height: 0; display: flex; flex-direction: column; padding: 0 2px 0 2px; }
.ed-title { height: 14px; line-height: 14px; font-weight: 700; color: #666c78; margin: 1px 0 0 -2px; white-space: nowrap; }
.ed-row { height: 15px; flex: none; display: flex; align-items: center; white-space: nowrap; font-size: 6.500px; }
.el { color: #787f8b; }
.l-cad { width: 26px; flex: none; }
.l-route { width: 39px; flex: none; }
.l-part { width: 41px; flex: none; margin-left: 2px; }
.l-unit { width: 34px; flex: none; }
.el.wide { width: 78px; flex: none; }
.ed-row .box { margin-right: 2px; }
.efield { height: 10px; line-height: 9px; border: 1px solid #cbcbcb; border-radius: 2px; padding-left: 2px; box-sizing: border-box; position: relative; color: #555; font-size: 6.600px; overflow: hidden; display: block; flex: none; }
.w-cad { font-size: 6px; width: 109px; }
.efield.sel .caret { position: absolute; right: 4px; top: 3px; }
.w-dots { width: 40px; margin: 0 5px 0 3px; flex: none; }
.w-route { width: 60px; margin-right: 4px; background: #e4e4e4; }
.w-load { width: 40px; margin-left: 3px; flex: none; }
.w-tpl { width: 73px; margin: 0 4px 0 12px; background: #ebebeb; }
.ebtn { height: 10px; line-height: 10px; border: 1px solid #d6d6d6; border-radius: 1px; text-align: center; color: #888; background: #f8f8f8; display: block; box-sizing: border-box; }
.ed-row .rd { margin-right: 6px; gap: 3px; }
.unit { margin-top: 4px; height: 16px; gap: 0; }
.unit .sq + .sq { margin-left: 2px; }
.filter { height: 14px; gap: 2px; }
.w-fl { width: 107px; background: #e9e9e9; }
.w-fr { width: 92px; background: #e9e9e9; margin-right: 1px; }
.faint { color: #93989f !important; }
.trees { flex: 1; min-height: 0; display: flex; gap: 2px; }
.tcol { width: 107px; flex: none; background: #e9eaec; overflow: hidden; padding-top: 1px; box-sizing: border-box; }
.tcol.right { display: flex; width: 107px; }
.mlist { flex: 1; min-width: 0; overflow: hidden; }
.trow { height: 10.300px; display: flex; align-items: center; gap: 2px; padding-left: 1px; white-space: nowrap; color: #333c58; font-size: 7.500px; }
.trow .box { border-color: #c2c2c2; }
.trow .lab { margin-left: 1px; }
.lv1 { padding-left: 8px; }
.lv2 { padding-left: 23px; }
.ops { padding-left: 5px; color: #666d7c; }
.hint { margin: 27px 0 0 16px; line-height: 8.800px; color: #1e3266; background: #ececee; padding-bottom: 4px; white-space: nowrap; }
.slim { width: 8px; }
.sb-thumb.long { height: 82px; }
.ed-foot { flex: none; height: 17px; margin-top: 6px; border-top: 1px solid #cfd1d4; display: flex; align-items: flex-start; padding: 4px 0 0 15px; box-sizing: border-box; background: #f3f3f3; }
.b .ed-foot { height: 23px; }
.fbtn { height: 11px; line-height: 11px; border-left: 1px solid #bbb; white-space: nowrap; font-size: 5.700px; color: #222; text-align: center; flex: none; box-sizing: border-box; }
.fbtn:nth-child(1) { width: 65px; }
.fbtn:nth-child(2) { width: 45px; }
.fbtn:nth-child(3) { width: 58px; }
.fbtn.more { display: flex; align-items: center; justify-content: center; gap: 4px; width: 19px; border-right: 1px solid #ddd; }

.gtop { flex: none; height: 319px; display: flex; }
.strip { width: 24px; flex: none; display: flex; flex-direction: column; align-items: center; background: #fff; overflow: hidden; }
.strip.rs { width: 20px; }
.dots { font-size: 6px; line-height: 6px; color: #888; display: flex; align-items: center; justify-content: center; flex: none; letter-spacing: -.5px; }
.cell { width: 15px; height: 17.200px; box-sizing: border-box; border: 1px dotted #c2c2c2; border-left: 0; border-right: 0; display: flex; align-items: center; justify-content: center; flex: none; }
.cell.picked { border: 1px solid #8d9aab; }
.viewport { flex: 1; min-width: 0; position: relative; overflow: hidden; background: linear-gradient(#c9d0e0 0, #dde1eb 40%, #eff1f6 65%, #fff 100%); }
.scene { display: block; width: 100%; height: 100%; }
.vp-badge { position: absolute; left: 2px; top: 2px; width: 8px; height: 8px; background: #2b6fe0; color: #fff; font-size: 5px; line-height: 8px; text-align: center; }
.vp-title { position: absolute; top: 2px; left: 0; right: 0; text-align: center; font-weight: 700; color: #333a4a; font-size: 7.800px; }
.vp-close { position: absolute; right: 2px; top: 2px; font-size: 7px; line-height: 8px; color: #222; font-weight: 700; }
.scalebar { position: absolute; bottom: 8px; width: 100px; display: flex; flex-direction: column; }
.a .scalebar { left: 206px; }
.b .scalebar { left: 115px; width: 56px; }
.sb-txt { display: flex; justify-content: space-between; font-size: 6px; line-height: 7px; color: #222; }
.sb-line { display: block; height: 2px; border: 1px solid #666; border-width: 0 0 1px; }
.sb-line b { display: block; width: 50%; height: 2px; background: #000; }
.triad { position: absolute; right: 14px; bottom: 11px; }
.b .triad { right: 14px; bottom: 12px; }

.htools { height: 24px; flex: none; display: flex; align-items: center; padding-left: 7px; background: #fff; }
.hcell { width: 17.500px; height: 16px; display: flex; align-items: center; justify-content: center; border-left: 1px dotted #bbb; box-sizing: border-box; }
.hcell.picked { border: 1.500px solid #8d9aab; border-radius: 2px; height: 18px; }
.hdots { width: 14px; text-align: center; color: #999; font-size: 8px; }

.console { height: 82px; }
.con-head { padding-left: 4px; }
.con-body { flex: 1; min-height: 0; background: #f6f6f6; display: flex; overflow: hidden; }
.con-text { flex: 1; min-width: 0; font-family: "Liberation Mono", monospace; font-size: 6.670px; line-height: 8px; color: #14346e; padding: 1px 0 0 3px; white-space: pre; }
.warnbtn { width: 13px; height: 11px; flex: none; font-size: 7px; line-height: 11px; text-align: center; margin-right: 3px; box-sizing: border-box; }
.warnbtn.y { background: #f0f03a; color: #b99a10; border-bottom: 1px solid #111; border-right: 1px solid #111; }
.warnbtn.r { background: #ea3c3c; color: #8a2020; margin-right: 1px; }
.vscroll.con { width: 7px; }
.con .sb-thumb { height: 10px; }
.con .sb-down { margin-top: 0; height: 9px; }
.tick { height: 7px; background: #fff; font-size: 6px; line-height: 7px; color: #222; text-align: center; }
.con-foot { height: 4px; flex: none; background: #bfc5ce; }
</style>
